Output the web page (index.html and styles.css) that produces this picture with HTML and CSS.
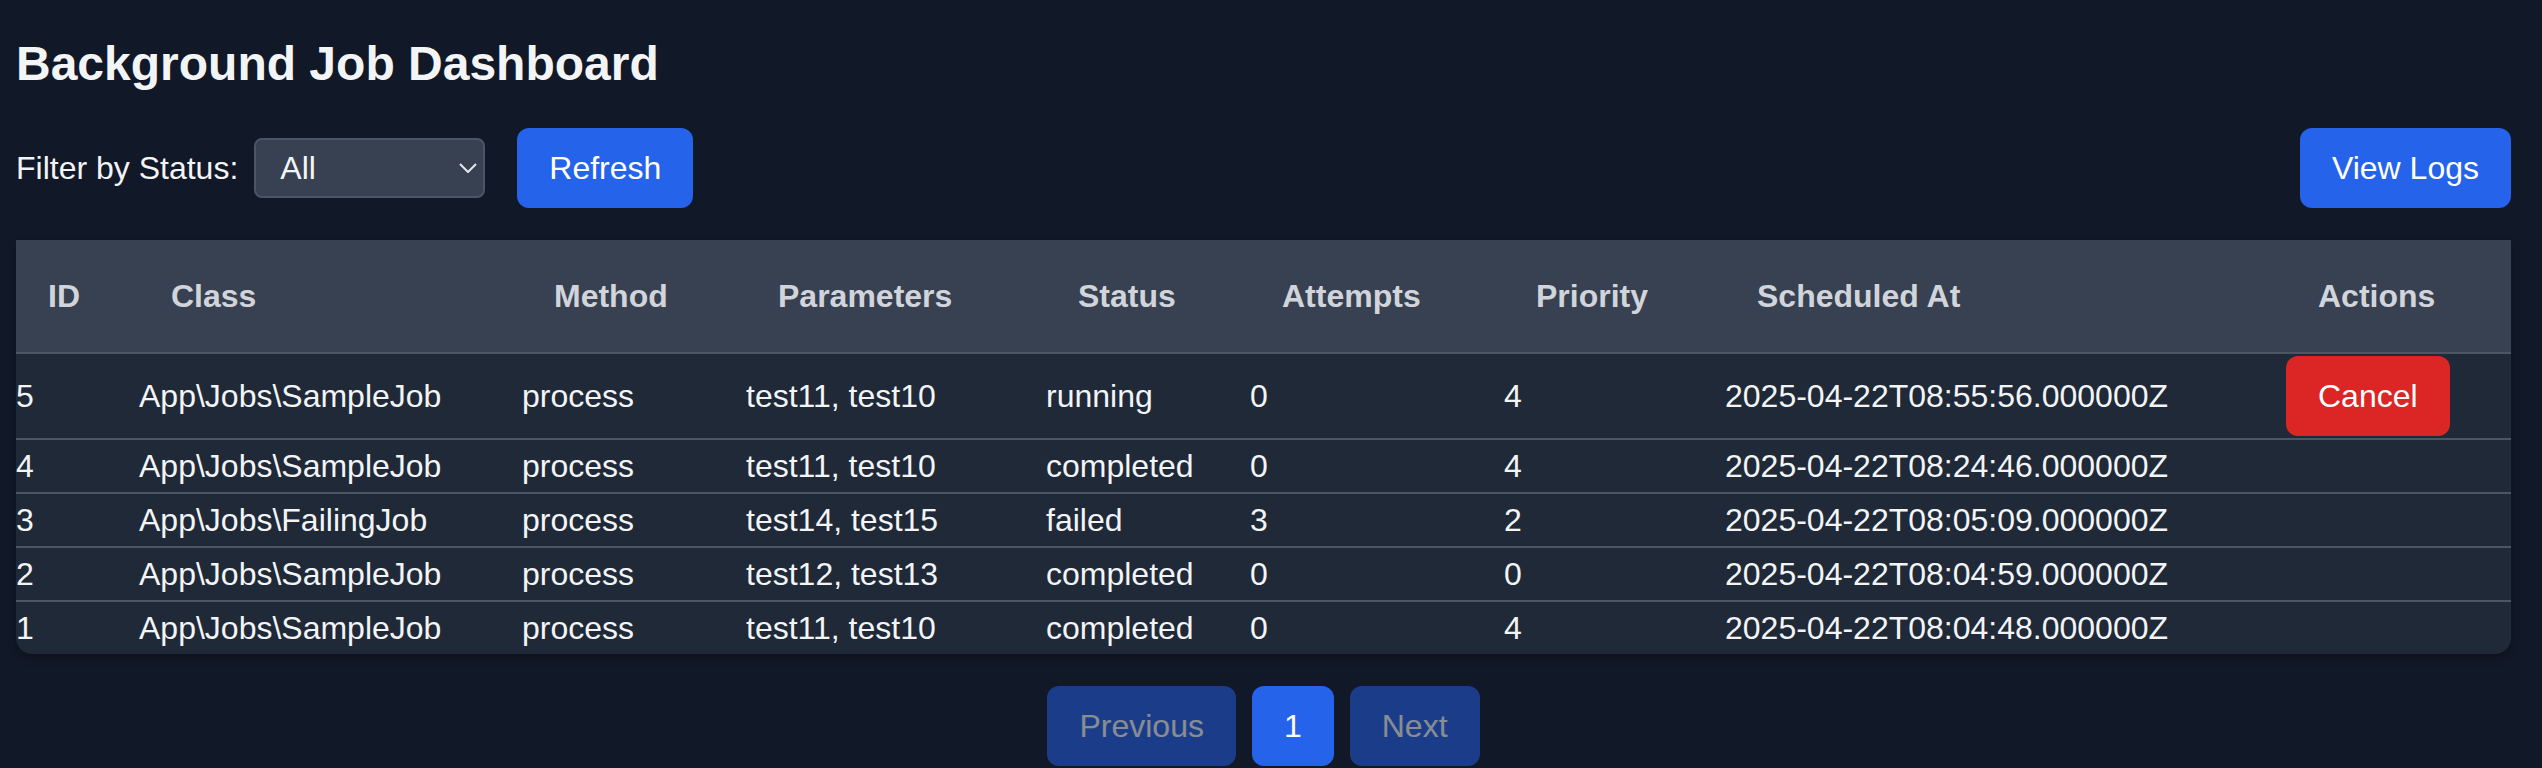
FILE: index.html
```html
<!DOCTYPE html>
<html lang="en">
<head>
<meta charset="utf-8">
<title>Background Job Dashboard</title>
<link rel="stylesheet" href="styles.css">
</head>
<body>
<div class="page">
  <h1 class="title">Background Job Dashboard</h1>
  <div class="controls">
    <div class="filters">
      <label class="filter-label" for="status">Filter by Status:</label>
      <div class="select-wrap">
        <select id="status" class="select">
          <option>All</option>
          <option>pending</option>
          <option>running</option>
          <option>completed</option>
          <option>failed</option>
        </select>
        <svg class="chevron" width="18" height="10" viewBox="0 0 18 10"><polyline points="1,1 9,9 17,1" fill="none" stroke="#e5e7eb" stroke-width="2"/></svg>
      </div>
      <button class="btn btn-blue refresh">Refresh</button>
    </div>
    <button class="btn btn-blue">View Logs</button>
  </div>

  <div class="table-card">
    <table class="jobs">
      <colgroup>
        <col class="c-id"><col class="c-class"><col class="c-method"><col class="c-params"><col class="c-status"><col class="c-attempts"><col class="c-priority"><col class="c-sched"><col class="c-actions">
      </colgroup>
      <thead>
        <tr>
          <th>ID</th><th>Class</th><th>Method</th><th>Parameters</th><th>Status</th><th>Attempts</th><th>Priority</th><th>Scheduled At</th><th>Actions</th>
        </tr>
      </thead>
      <tbody>
        <tr>
          <td>5</td><td>App\Jobs\SampleJob</td><td>process</td><td>test11, test10</td><td>running</td><td>0</td><td>4</td><td>2025-04-22T08:55:56.000000Z</td><td><button class="btn btn-red">Cancel</button></td>
        </tr>
        <tr>
          <td>4</td><td>App\Jobs\SampleJob</td><td>process</td><td>test11, test10</td><td>completed</td><td>0</td><td>4</td><td>2025-04-22T08:24:46.000000Z</td><td></td>
        </tr>
        <tr>
          <td>3</td><td>App\Jobs\FailingJob</td><td>process</td><td>test14, test15</td><td>failed</td><td>3</td><td>2</td><td>2025-04-22T08:05:09.000000Z</td><td></td>
        </tr>
        <tr>
          <td>2</td><td>App\Jobs\SampleJob</td><td>process</td><td>test12, test13</td><td>completed</td><td>0</td><td>0</td><td>2025-04-22T08:04:59.000000Z</td><td></td>
        </tr>
        <tr>
          <td>1</td><td>App\Jobs\SampleJob</td><td>process</td><td>test11, test10</td><td>completed</td><td>0</td><td>4</td><td>2025-04-22T08:04:48.000000Z</td><td></td>
        </tr>
      </tbody>
    </table>
  </div>

  <div class="pagination">
    <button class="btn btn-blue disabled">Previous</button>
    <button class="btn btn-blue">1</button>
    <button class="btn btn-blue disabled">Next</button>
  </div>
</div>
</body>
</html>
```

FILE: styles.css
```css
* { box-sizing: border-box; }

html, body {
  margin: 0;
  padding: 0;
  background: #111827;
  color: #f3f4f6;
  font-family: "Liberation Sans", Arial, Helvetica, sans-serif;
  font-size: 32px;
  line-height: 48px;
}

.page {
  padding: 32px 31px 0 16px;
}

.title {
  margin: 0 0 32px 0;
  font-size: 48px;
  line-height: 64px;
  font-weight: 700;
  color: #f3f4f6;
}

.controls {
  display: flex;
  align-items: center;
  justify-content: space-between;
  margin-bottom: 32px;
}

.filters {
  display: flex;
  align-items: center;
}

.filter-label {
  margin-right: 16px;
  color: #f3f4f6;
}

.select-wrap {
  position: relative;
  width: 231px;
  height: 60px;
}

.select {
  appearance: none;
  -webkit-appearance: none;
  width: 100%;
  height: 100%;
  background: #374151;
  border: 2px solid #4b5563;
  border-radius: 8px;
  color: #f3f4f6;
  font-family: inherit;
  font-size: 32px;
  padding: 0 0 0 24px;
  outline: none;
}

.chevron {
  position: absolute;
  right: 8px;
  top: 25px;
  pointer-events: none;
}

.btn {
  border: none;
  border-radius: 12px;
  padding: 16px 32px;
  font-family: inherit;
  font-size: 32px;
  line-height: 48px;
  color: #ffffff;
  cursor: pointer;
}

.btn-blue { background: #2563eb; }
.btn-red { background: #dc2626; }

.refresh { margin-left: 32px; }

.table-card {
  background: #1f2937;
  border-radius: 0 0 16px 16px;
  box-shadow: 0 4px 8px rgba(0, 0, 0, 0.25);
}

.jobs {
  width: 100%;
  border-collapse: collapse;
  table-layout: fixed;
}

.c-id { width: 123px; }
.c-class { width: 383px; }
.c-method { width: 224px; }
.c-params { width: 300px; }
.c-status { width: 204px; }
.c-attempts { width: 254px; }
.c-priority { width: 221px; }
.c-sched { width: 561px; }
.c-actions { width: 225px; }

.jobs th {
  background: #374151;
  color: #d1d5db;
  font-weight: 700;
  text-align: left;
  padding: 32px 0 32px 32px;
  border-bottom: 2px solid #4b5563;
  white-space: nowrap;
}

.jobs td {
  padding: 2px 0;
  text-align: left;
  white-space: nowrap;
  color: #f3f4f6;
  border-bottom: 2px solid #4b5563;
}

.jobs tbody tr:last-child td {
  border-bottom: none;
}

.pagination {
  display: flex;
  justify-content: center;
  gap: 16px;
  margin-top: 32px;
}

.disabled { opacity: 0.5; }
```
